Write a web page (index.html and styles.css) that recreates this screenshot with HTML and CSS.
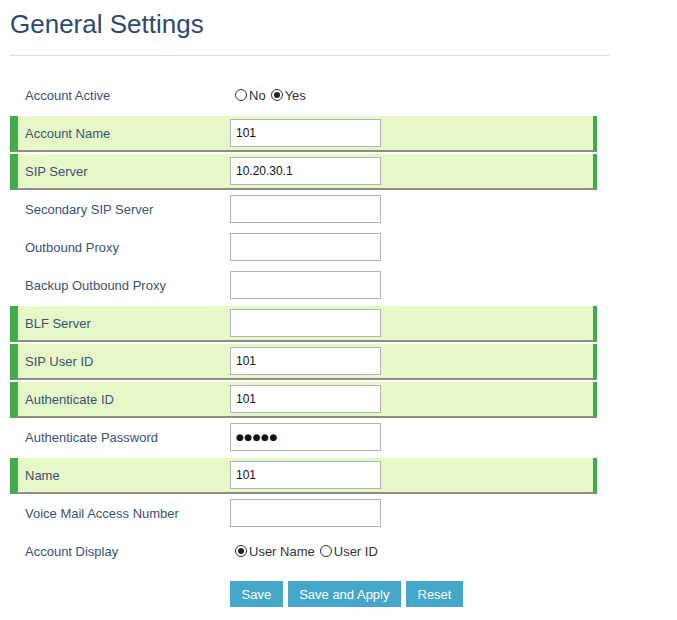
FILE: index.html
```html
<!DOCTYPE html>
<html>
<head>
<meta charset="utf-8">
<link rel="stylesheet" href="styles.css">
</head>
<body>
<h1 class="title">General Settings</h1>
<div class="rule"></div>
<div class="form">
  <div class="row">
    <div class="label">Account Active</div>
    <div class="field radios">
      <span class="radio"></span><span class="rtext">No</span>
      <span class="radio on"></span><span class="rtext">Yes</span>
    </div>
  </div>
  <div class="row hl">
    <div class="label">Account Name</div>
    <div class="field"><div class="input">101</div></div>
  </div>
  <div class="row hl">
    <div class="label">SIP Server</div>
    <div class="field"><div class="input">10.20.30.1</div></div>
  </div>
  <div class="row">
    <div class="label">Secondary SIP Server</div>
    <div class="field"><div class="input"></div></div>
  </div>
  <div class="row">
    <div class="label">Outbound Proxy</div>
    <div class="field"><div class="input"></div></div>
  </div>
  <div class="row">
    <div class="label">Backup Outbound Proxy</div>
    <div class="field"><div class="input"></div></div>
  </div>
  <div class="row hl">
    <div class="label">BLF Server</div>
    <div class="field"><div class="input"></div></div>
  </div>
  <div class="row hl">
    <div class="label">SIP User ID</div>
    <div class="field"><div class="input">101</div></div>
  </div>
  <div class="row hl">
    <div class="label">Authenticate ID</div>
    <div class="field"><div class="input">101</div></div>
  </div>
  <div class="row">
    <div class="label">Authenticate Password</div>
    <div class="field"><div class="input pw">●●●●●</div></div>
  </div>
  <div class="row hl">
    <div class="label">Name</div>
    <div class="field"><div class="input">101</div></div>
  </div>
  <div class="row">
    <div class="label">Voice Mail Access Number</div>
    <div class="field"><div class="input"></div></div>
  </div>
  <div class="row">
    <div class="label">Account Display</div>
    <div class="field radios">
      <span class="radio on"></span><span class="rtext">User Name</span>
      <span class="radio"></span><span class="rtext">User ID</span>
    </div>
  </div>
  <div class="buttons">
    <span class="btn">Save</span>
    <span class="btn">Save and Apply</span>
    <span class="btn">Reset</span>
  </div>
</div>
</body>
</html>
```
FILE: styles.css
```css
html, body {
  margin: 0;
  padding: 0;
  background: #fff;
}
body {
  padding: 0 10px;
  font-family: "Liberation Sans", Arial, sans-serif;
}
.title {
  margin: 0;
  padding-top: 9px;
  font-size: 26px;
  font-weight: normal;
  line-height: 30px;
  color: #2d4a6c;
}
.rule {
  width: 600px;
  height: 1px;
  background: #dcdcdc;
  margin-top: 16px;
}
.form {
  margin-top: 22px;
  width: 587px;
}
.row {
  display: flex;
  align-items: center;
  box-sizing: border-box;
  height: 36px;
  margin-bottom: 2px;
  border-left: 8px solid transparent;
  border-right: 4px solid transparent;
  border-bottom: 2px solid transparent;
}
.row.hl {
  background: #e6f8c8;
  border-left-color: #3fae4a;
  border-right-color: #3fae4a;
  border-bottom-color: #8c8c80;
}
.label {
  width: 205px;
  padding-left: 7px;
  font-size: 13px;
  color: #3a5273;
}
.field {
  display: flex;
  align-items: center;
}
.input {
  box-sizing: border-box;
  width: 151px;
  height: 28px;
  border: 1px solid #b4b4b4;
  background: #fff;
  padding: 0 5px;
  font-size: 12px;
  line-height: 26px;
  color: #111;
}
.input.pw {
  font-size: 9px;
  letter-spacing: 0.5px;
  padding-left: 5px;
  font-family: "DejaVu Sans", sans-serif;
}
.radios {
  padding-left: 5px;
  font-size: 13px;
  color: #333;
}
.radio {
  box-sizing: border-box;
  width: 12px;
  height: 12px;
  border: 1px solid #333;
  border-radius: 50%;
  display: inline-flex;
  align-items: center;
  justify-content: center;
  margin-right: 2px;
  background: #fff;
}
.radio.on::after {
  content: "";
  width: 6px;
  height: 6px;
  border-radius: 50%;
  background: #222;
}
.rtext {
  margin-right: 5px;
}
.buttons {
  display: flex;
  gap: 5px;
  margin-top: 11px;
  padding-left: 220px;
}
.btn {
  display: inline-block;
  height: 26px;
  line-height: 27px;
  padding: 0 11.5px;
  background: #44a6c8;
  color: #fff;
  font-size: 13px;
}
```
